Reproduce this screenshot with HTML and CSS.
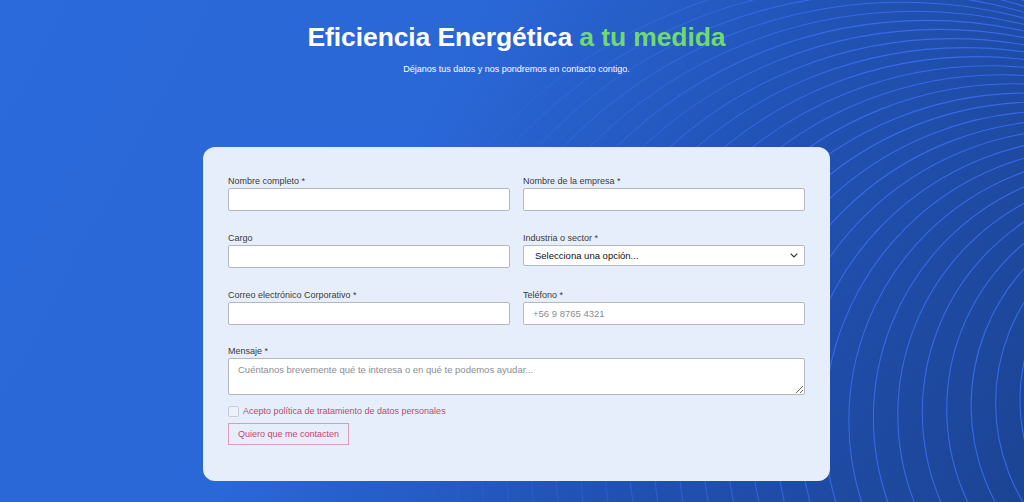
FILE: index.html
```html
<!DOCTYPE html>
<html lang="es">
<head>
  <meta charset="UTF-8" />
  <meta name="viewport" content="width=device-width, initial-scale=1.0"/>
  <title>Eficiencia Energética</title>
  <link rel="stylesheet" href="styles.css">
</head>
<body>

  <!-- decorative rings behind the page -->
  <svg class="rings" width="1024" height="502" viewBox="0 0 1024 502" aria-hidden="true">
    <defs>
      <linearGradient id="fade" x1="380" y1="0" x2="860" y2="0" gradientUnits="userSpaceOnUse">
        <stop offset="0" stop-color="#fff" stop-opacity="0"/>
        <stop offset="1" stop-color="#fff" stop-opacity="1"/>
      </linearGradient>
      <mask id="ringMask" maskUnits="userSpaceOnUse" x="0" y="0" width="1024" height="502">
        <rect width="1024" height="502" fill="url(#fade)"/>
      </mask>
    </defs>
    <g mask="url(#ringMask)" fill="none" stroke="#3d72f5" stroke-width="1.1" stroke-opacity="0.8">
      <circle cx="1200" cy="400" r="180"/>
      <circle cx="1187.6" cy="403" r="192"/>
      <circle cx="1175.2" cy="405.9" r="204.1"/>
      <circle cx="1162.8" cy="408.9" r="216.1"/>
      <circle cx="1150.4" cy="411.9" r="228.1"/>
      <circle cx="1138" cy="414.8" r="240.2"/>
      <circle cx="1125.6" cy="417.8" r="252.2"/>
      <circle cx="1113.1" cy="420.7" r="264.3"/>
      <circle cx="1100.7" cy="423.7" r="276.3"/>
      <circle cx="1088.3" cy="426.7" r="288.3"/>
      <circle cx="1075.9" cy="429.6" r="300.4"/>
      <circle cx="1063.5" cy="432.6" r="312.4"/>
      <circle cx="1051.1" cy="435.6" r="324.4"/>
      <circle cx="1038.7" cy="438.5" r="336.5"/>
      <circle cx="1026.3" cy="441.5" r="348.5"/>
      <circle cx="1013.9" cy="444.4" r="360.6"/>
      <circle cx="1001.5" cy="447.4" r="372.6"/>
      <circle cx="989.1" cy="450.4" r="384.6"/>
      <circle cx="976.7" cy="453.3" r="396.7"/>
      <circle cx="964.3" cy="456.3" r="408.7"/>
      <circle cx="951.9" cy="459.3" r="420.7"/>
      <circle cx="939.4" cy="462.2" r="432.8"/>
      <circle cx="927" cy="465.2" r="444.8"/>
      <circle cx="914.6" cy="468.1" r="456.9"/>
      <circle cx="902.2" cy="471.1" r="468.9"/>
      <circle cx="889.8" cy="474.1" r="480.9"/>
      <circle cx="877.4" cy="477" r="493"/>
      <circle cx="865" cy="480" r="505"/>
    </g>
  </svg>

  <main class="page">
    <header class="hero">
      <h1>Eficiencia Energética <span class="accent">a tu medida</span></h1>
      <p>Déjanos tus datos y nos pondremos en contacto contigo.</p>
    </header>

    <form class="card">
      <div class="grid">
        <div class="field">
          <label for="nombre">Nombre completo *</label>
          <input type="text" id="nombre" />
        </div>
        <div class="field">
          <label for="empresa">Nombre de la empresa *</label>
          <input type="text" id="empresa" />
        </div>
        <div class="field">
          <label for="cargo">Cargo</label>
          <input type="text" id="cargo" />
        </div>
        <div class="field">
          <label for="industria">Industria o sector *</label>
          <div class="select-wrap">
            <select id="industria">
              <option>Selecciona una opción...</option>
            </select>
            <svg class="chevron" width="8" height="5" viewBox="0 0 8 5"><path d="M0.7 0.7 L4 4 L7.3 0.7" fill="none" stroke="#333" stroke-width="1.2"/></svg>
          </div>
        </div>
        <div class="field">
          <label for="correo">Correo electrónico Corporativo *</label>
          <input type="email" id="correo" />
        </div>
        <div class="field">
          <label for="telefono">Teléfono *</label>
          <input type="tel" id="telefono" placeholder="+56 9 8765 4321" />
        </div>
        <div class="field wide">
          <label for="mensaje">Mensaje *</label>
          <textarea id="mensaje" placeholder="Cuéntanos brevemente qué te interesa o en qué te podemos ayudar..."></textarea>
        </div>
      </div>

      <label class="check">
        <input type="checkbox" />
        <span>Acepto política de tratamiento de datos personales</span>
      </label>

      <button type="button" class="submit">Quiero que me contacten</button>
    </form>
  </main>

</body>
</html>
```

FILE: styles.css
```css
html, body {
  margin: 0;
  height: 502px;
  overflow: hidden;
}
body {
  position: relative;
  font-family: 'Liberation Sans', Arial, sans-serif;
  color: #333;
  background: linear-gradient(118deg, #2b6ada 0%, #2a67d7 38%, #2152b4 66%, #1c4494 100%);
}
.rings {
  position: absolute;
  top: 0;
  left: 0;
  z-index: 0;
}
.page {
  position: relative;
  z-index: 1;
  padding-left: 9px;
}
.hero {
  text-align: center;
  padding-top: 21px;
}
.hero h1 {
  margin: 0;
  font-size: 26.5px;
  line-height: 32px;
  font-weight: bold;
  color: #fff;
  letter-spacing: -0.1px;
}
.hero .accent { color: #70d96f; }
.hero p {
  margin: 10px 0 0 0;
  font-size: 9px;
  line-height: 12px;
  color: #fff;
}

.card {
  width: 627px;
  box-sizing: border-box;
  margin: 72px auto 0 auto;
  padding: 28px 25px 36px 25px;
  background-color: #e7eefb;
  border-radius: 12px;
}
.grid {
  display: grid;
  grid-template-columns: 1fr 1fr;
  column-gap: 13px;
  row-gap: 21px;
}
.field { display: flex; flex-direction: column; }
.field.wide { grid-column: 1 / 3; margin-top: -1px; }
.field label {
  font-size: 9px;
  line-height: 12px;
  color: #3a3a3a;
  margin-bottom: 1px;
}
input[type="text"], input[type="email"], input[type="tel"], select, textarea {
  box-sizing: border-box;
  width: 100%;
  height: 23px;
  margin: 0;
  padding: 0 9px;
  font-family: 'Liberation Sans', Arial, sans-serif;
  font-size: 9.5px;
  color: #222;
  background-color: #fff;
  border: 1px solid #b3b7be;
  border-radius: 2px;
  outline: none;
}
input::placeholder, textarea::placeholder { color: #8a8d93; }
.select-wrap { position: relative; }
select {
  -webkit-appearance: none;
  appearance: none;
  height: 21px;
  padding: 0 11px;
  color: #111;
}
.chevron {
  position: absolute;
  right: 7px;
  top: 8px;
}
textarea {
  height: 37px;
  padding: 5px 9px;
  resize: vertical;
}

.check {
  display: flex;
  align-items: center;
  gap: 4px;
  margin-top: 10px;
  font-size: 9px;
  line-height: 12px;
  color: #c3456f;
}
.check input {
  -webkit-appearance: none;
  appearance: none;
  width: 11px;
  height: 11px;
  margin: 0;
  border: 1px solid #c6ccd6;
  border-radius: 2px;
  background-color: #edf1f9;
}
.submit {
  display: block;
  margin-top: 6px;
  height: 22px;
  padding: 0 9px;
  font-family: 'Liberation Sans', Arial, sans-serif;
  font-size: 9px;
  color: #c3456f;
  background: transparent;
  border: 1px solid #dc9bb8;
  border-radius: 0;
  cursor: pointer;
}
```
